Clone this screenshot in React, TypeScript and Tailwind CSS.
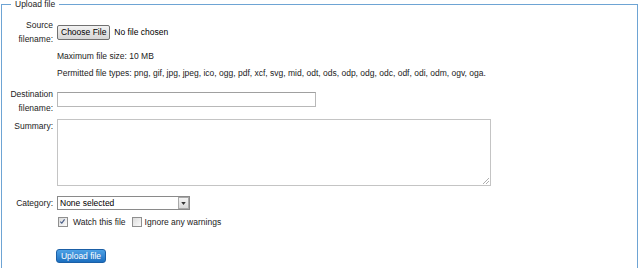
import React from "react";

const font = { fontFamily: '"Liberation Sans", Arial, sans-serif' };

function Checkbox({ checked }: { checked?: boolean }) {
  return (
    <span className="relative inline-block w-[10px] h-[10px] border border-[#8f8f8f] bg-gradient-to-br from-[#dcdcdc] to-[#fbfbfb]">
      {checked && (
        <svg viewBox="0 0 10 10" className="absolute left-0 top-0 w-[8px] h-[8px]">
          <path d="M1.5 4.5 L3.5 6.5 L7 1.8" fill="none" stroke="#4a5f8a" strokeWidth="1.4" />
        </svg>
      )}
    </span>
  );
}

export default function App() {
  return (
    <div className="w-[640px] h-[268px] overflow-hidden bg-white text-[8.5px] text-[#222]" style={font}>
      <fieldset className="ml-[1px] w-[637px] border border-[#6ea4d4] p-0 m-0 mt-0 min-h-[300px]">
        <legend className="ml-[9px] px-[4px] leading-[9px] text-[#222]">Upload file</legend>
        <div className="grid grid-cols-[51px_1fr] gap-x-[4px] pt-[9px] leading-[14px]">
          {/* Source */}
          <div className="text-right">Source filename:</div>
          <div className="flex items-center gap-[4px]">
            <button className="h-[15px] px-[3px] border border-[#707070] rounded-[2px] bg-gradient-to-b from-[#f2f2f2] to-[#d6d6d6] leading-[12px] text-[8.5px] text-black">
              Choose File
            </button>
            <span className="text-black">No file chosen</span>
          </div>

          <div className="mt-[3px]" />
          <div className="mt-[3px]">Maximum file size: 10 MB</div>

          <div className="mt-[3px]" />
          <div className="mt-[3px]">
            Permitted file types: png, gif, jpg, jpeg, ico, ogg, pdf, xcf, svg, mid, odt, ods, odp, odg, odc, odf, odi, odm, ogv, oga.
          </div>

          {/* Destination */}
          <div className="mt-[7px] text-right">Destination filename:</div>
          <div className="mt-[12px]">
            <div className="w-[259px] h-[15px] border border-[#b8b8b8] border-t-[#a0a0a0] bg-white" />
          </div>

          {/* Summary */}
          <div className="mt-[4px] text-right">Summary:</div>
          <div className="mt-[4px]">
            <div className="relative w-[434px] h-[67px] border border-[#c4c4c4] bg-white">
              <svg viewBox="0 0 6 6" className="absolute right-[1px] bottom-[1px] w-[6px] h-[6px]">
                <path d="M6 0 L0 6 M6 3 L3 6" stroke="#9a9a9a" strokeWidth="0.8" />
              </svg>
            </div>
          </div>

          {/* Category */}
          <div className="mt-[10px] text-right">Category:</div>
          <div className="mt-[10px]">
            <div className="flex items-center w-[133px] h-[14px] border border-[#8a8a8a] bg-white">
              <span className="flex-1 pl-[2px] text-black leading-[12px]">None selected</span>
              <span className="flex items-center justify-center w-[11px] h-[12px] border border-[#a9a9a9] bg-gradient-to-b from-[#f4f4f4] to-[#d9d9d9]">
                <svg viewBox="0 0 6 4" className="w-[5px] h-[3px]">
                  <path d="M0 0 L6 0 L3 4 Z" fill="#333" />
                </svg>
              </span>
            </div>
          </div>

          {/* Options */}
          <div className="mt-[5px]" />
          <div className="mt-[5px] flex items-center">
            <span className="ml-[1px] mr-[5px] flex"><Checkbox checked /></span>
            <span>Watch this file</span>
            <span className="ml-[6px] mr-[3px] flex"><Checkbox /></span>
            <span>Ignore any warnings</span>
          </div>

          {/* Submit */}
          <div className="mt-[20px]" />
          <div className="mt-[20px] -ml-[1px]">
            <button className="h-[14px] w-[50px] rounded-[3px] border border-[#1b5fa6] bg-gradient-to-b from-[#4da2e6] to-[#1b6fc0] text-white leading-[12px] text-[8.5px]">
              Upload file
            </button>
          </div>
        </div>
      </fieldset>
    </div>
  );
}
